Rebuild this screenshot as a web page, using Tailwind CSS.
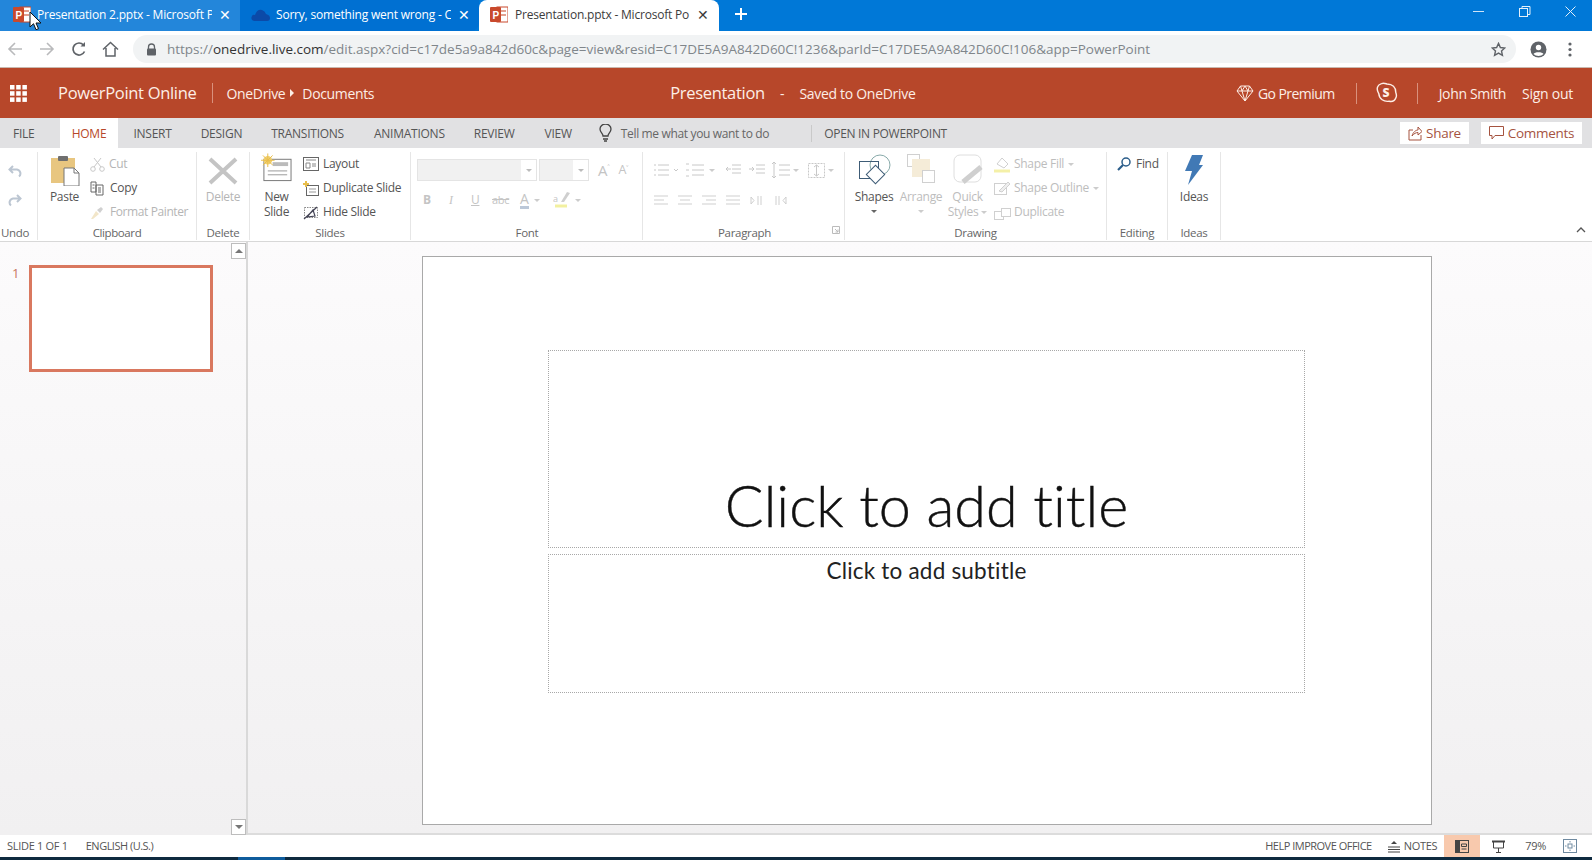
<!DOCTYPE html>
<html lang="en">
<head>
  <meta charset="UTF-8">
  <title>Presentation.pptx - Microsoft PowerPoint Online</title>
  <script src="https://cdn.jsdelivr.net/npm/@tailwindcss/browser@4"></script>
</head>
<body class="w-[1592px] h-[860px] overflow-hidden bg-white font-['Open_Sans','Noto_Sans',sans-serif] text-[#444]">

  <!-- Browser tabs -->
  <div class="relative h-[31px] flex bg-[#0078d7] text-white text-[12px] tracking-[-0.2px]">
    <div class="w-[240px] flex items-center pl-[13px] pb-[2px] bg-[#2386da]">
      <svg class="w-[18px] h-[17px] shrink-0" viewBox="0 0 18 17"><rect x="7" y="1" width="11" height="15" fill="#fff" stroke="#c9492c"/><rect x="9" y="4" width="7" height="2" fill="#e3a08f"/><rect x="9" y="8" width="7" height="2" fill="#e3a08f"/><rect x="0" y="1" width="11" height="15" rx="1" fill="#c9492c"/><text x="2.500" y="12.500" font-size="10" font-weight="700" fill="#fff" font-family="Liberation Sans">P</text></svg>
      <span class="ml-[6px] w-[175px] overflow-hidden whitespace-nowrap">Presentation 2.pptx - Microsoft P</span>
      <span class="ml-[7px] text-[14px] leading-none">✕</span>
    </div>
    <div class="w-[239px] flex items-center pl-[11px] pb-[2px] rounded-br-[8px] bg-[#0070d2]">
      <svg class="w-[19px] h-[12px] shrink-0" viewBox="0 0 19 12"><path d="M3 12 Q-1 11 1 7 Q2 5 4 6 Q6 0 11 1 Q14 2 15 5 Q19 6 19 9 Q19 12 16 12 Z" fill="#0b4aa8"/></svg>
      <span class="ml-[6px] w-[175px] overflow-hidden whitespace-nowrap">Sorry, something went wrong - C</span>
      <span class="ml-[7px] text-[14px] leading-none">✕</span>
    </div>
    <div class="w-[240px] flex items-center pl-[11px] pb-[2px] bg-white rounded-t-[8px] text-[#3c3c3c]">
      <svg class="w-[18px] h-[17px] shrink-0" viewBox="0 0 18 17"><rect x="7" y="1" width="11" height="15" fill="#fff" stroke="#c9492c"/><rect x="9" y="4" width="7" height="2" fill="#e3a08f"/><rect x="9" y="8" width="7" height="2" fill="#e3a08f"/><rect x="0" y="1" width="11" height="15" rx="1" fill="#c9492c"/><text x="2.500" y="12.500" font-size="10" font-weight="700" fill="#fff" font-family="Liberation Sans">P</text></svg>
      <span class="ml-[7px] w-[176px] overflow-hidden whitespace-nowrap">Presentation.pptx - Microsoft Po</span>
      <span class="ml-[6px] text-[14px] leading-none">✕</span>
    </div>
    <svg class="w-[14px] h-[14px] ml-[15px] mt-[7px]" viewBox="0 0 14 14" stroke="#fff" stroke-width="2"><path d="M7 1v12M1 7h12"/></svg>
    <div class="ml-auto flex items-center h-[22px] pr-[15px] gap-[33px]">
      <svg class="w-[13px] h-[13px]" viewBox="0 0 13 13" stroke="#cfe4f7"><path d="M1 6.500h11"/></svg>
      <svg class="w-[13px] h-[13px]" viewBox="0 0 13 13" fill="none" stroke="#e4f0fa"><rect x="1.500" y="3.500" width="8" height="8"/><path d="M4 3V1.500h8v8h-2"/></svg>
      <svg class="w-[13px] h-[13px]" viewBox="0 0 13 13" stroke="#e4f0fa"><path d="M1.500 1.500l10 10M11.500 1.500l-10 10"/></svg>
    </div>
    <!-- mouse pointer -->
    <svg class="absolute left-[29px] top-[11px] w-[13px] h-[20px]" viewBox="0 0 13 20"><path d="M1 1v15l3.500-3.300 2.500 6 2.500-1-2.500-5.700h5z" fill="#fff" stroke="#111"/></svg>
  </div>

  <!-- Address bar -->
  <div class="h-[37px] flex items-center border-b border-[#c9b9b0] bg-white">
    <svg class="w-[16px] h-[16px] ml-[7px]" viewBox="0 0 16 16" fill="none" stroke="#b9babc" stroke-width="1.600"><path d="M15 8H2M8 2L2 8l6 6"/></svg>
    <svg class="w-[16px] h-[16px] ml-[16px]" viewBox="0 0 16 16" fill="none" stroke="#b9babc" stroke-width="1.600"><path d="M1 8h13M8 2l6 6-6 6"/></svg>
    <svg class="w-[16px] h-[16px] ml-[16px]" viewBox="0 0 16 16" fill="none" stroke="#5f6368" stroke-width="1.700"><path d="M13.500 10.500A6 6 0 1 1 12.500 4"/><path d="M14 1v4.500H9.500" fill="#5f6368" stroke="none"/></svg>
    <svg class="w-[17px] h-[16px] ml-[15px]" viewBox="0 0 17 16" fill="none" stroke="#5f6368" stroke-width="1.500"><path d="M1 8.500L8.500 1.500 16 8.500M4 7v8h9V7"/></svg>
    <div class="ml-[14px] w-[1383px] h-[28px] rounded-full bg-[#f1f3f4] flex items-center pl-[13px] text-[13.500px] tracking-[-0.01px] text-[#80868b]">
      <svg class="w-[11px] h-[13px]" viewBox="0 0 11 13"><path d="M2.500 6V4a3 3 0 0 1 6 0v2" fill="none" stroke="#5f6368" stroke-width="1.300"/><rect x="1" y="5.500" width="9" height="7" rx="1" fill="#5f6368"/></svg>
      <span class="ml-[10px] whitespace-nowrap">https://<span class="text-[#333]">onedrive.live.com</span>/edit.aspx?cid=c17de5a9a842d60c&amp;page=view&amp;resid=C17DE5A9A842D60C!1236&amp;parId=C17DE5A9A842D60C!106&amp;app=PowerPoint</span>
      <svg class="ml-auto mr-[10px] w-[15px] h-[15px]" viewBox="0 0 16 16" fill="none" stroke="#5f6368" stroke-width="1.500"><path d="M8 1.500l2 4.400 4.700.5-3.500 3.200 1 4.700L8 11.900l-4.200 2.400 1-4.700L1.300 6.400 6 5.900z"/></svg>
    </div>
    <svg class="w-[17px] h-[17px] ml-[14px]" viewBox="0 0 17 17"><circle cx="8.500" cy="8.500" r="8" fill="#5f6368"/><circle cx="8.500" cy="6.500" r="2.700" fill="#fff"/><path d="M3.500 13c1-2.500 9-2.500 10 0-2.500 2.500-7.500 2.500-10 0z" fill="#fff"/></svg>
    <svg class="w-[4px] h-[15px] ml-[21px]" viewBox="0 0 4 15" fill="#5f6368"><circle cx="2" cy="2" r="1.600"/><circle cx="2" cy="7.500" r="1.600"/><circle cx="2" cy="13" r="1.600"/></svg>
  </div>

  <!-- App header -->
  <div class="h-[50px] flex items-center bg-[#b7472a] text-[#fdeee6] whitespace-nowrap">
    <svg class="w-[17px] h-[17px] ml-[10px]" viewBox="0 0 17 17" fill="#fff"><rect width="4.500" height="4.500"/><rect x="6.200" width="4.500" height="4.500"/><rect x="12.400" width="4.500" height="4.500"/><rect y="6.200" width="4.500" height="4.500"/><rect x="6.200" y="6.200" width="4.500" height="4.500"/><rect x="12.400" y="6.200" width="4.500" height="4.500"/><rect y="12.400" width="4.500" height="4.500"/><rect x="6.200" y="12.400" width="4.500" height="4.500"/><rect x="12.400" y="12.400" width="4.500" height="4.500"/></svg>
    <span class="ml-[31px] text-[16.500px] tracking-[-0.3px]">PowerPoint Online</span>
    <span class="ml-[15px] w-px h-[20px] bg-[#d9917d]"></span>
    <span class="ml-[14px] text-[14px] tracking-[-0.35px]">OneDrive</span>
    <span class="ml-[5px] w-0 h-0 border-y-[4px] border-y-transparent border-l-[4px] border-l-[#fdeee6]"></span>
    <span class="ml-[8px] text-[14px] tracking-[-0.35px]">Documents</span>
    <span class="ml-[296px] text-[16.500px] tracking-[-0.3px]">Presentation</span>
    <span class="ml-[15px] text-[14px]">-</span>
    <span class="ml-[15px] text-[14px] tracking-[-0.3px]">Saved to OneDrive</span>
    <svg class="ml-auto w-[18px] h-[17px]" viewBox="0 0 18 17" fill="none" stroke="#fdeee6"><path d="M4.500 1h9L17 6l-8 10L1 6zM1 6h16M6 6l3 10 3-10M4.500 1L6 6l3-5 3 5 1.500-5"/></svg>
    <span class="ml-[4px] text-[14px] tracking-[-0.55px]">Go Premium</span>
    <span class="ml-[21px] w-px h-[21px] bg-[#d9917d]"></span>
    <svg class="ml-[19px] w-[22px] h-[22px]" viewBox="0 0 20 20" fill="none" stroke="#fdeee6" stroke-width="1.300"><path d="M5 1.500c2-.800 3-.300 5 .300 5 0 8 3 8 7.700 .800 2 .800 3.500 0 5-1 2.500-3.500 3.500-6 3-5 .800-9-2-9.500-7C1 8 .800 6 1.500 4.300 2 3 3.500 2 5 1.500z"/><text x="5.800" y="14" font-size="11" font-weight="800" fill="#fdeee6" stroke="none" font-family="Open Sans">S</text></svg>
    <span class="ml-[19px] w-px h-[21px] bg-[#d9917d]"></span>
    <span class="ml-[21px] text-[14px] tracking-[-0.35px]">John Smith</span>
    <span class="ml-[16px] mr-[19px] text-[14px] tracking-[-0.25px]">Sign out</span>
  </div>

  <!-- Ribbon tabs -->
  <div class="h-[30px] flex items-center bg-[#e1e1e3] text-[12px] text-[#555] tracking-[-0.25px] whitespace-nowrap">
    <span class="ml-[13px] pt-[1px]">FILE</span>
    <span class="ml-[26px] w-[58px] h-full pt-[1px] pr-[1px] flex items-center justify-center bg-white text-[#b7472a]">HOME</span>
    <span class="ml-[15px] pt-[1px]">INSERT</span>
    <span class="ml-[29px] pt-[1px]">DESIGN</span>
    <span class="ml-[29px] pt-[1px]">TRANSITIONS</span>
    <span class="ml-[30px] pt-[1px]">ANIMATIONS</span>
    <span class="ml-[29px] pt-[1px]">REVIEW</span>
    <span class="ml-[30px] pt-[1px]">VIEW</span>
    <svg class="ml-[27px] w-[13px] h-[18px]" viewBox="0 0 13 18" fill="none" stroke="#444" stroke-width="1.300"><path d="M4 12c0-3-3-3.500-3-7a5.500 5 0 0 1 11 0c0 3.500-3 4-3 7z"/><path d="M4 15h5M5 17h3"/></svg>
    <span class="ml-[9px] pt-[1px] text-[#666] tracking-[-0.35px]">Tell me what you want to do</span>
    <span class="ml-[42px] w-px h-[17px] bg-[#c9c9c9]"></span>
    <span class="ml-[12px] pt-[1px] tracking-[-0.3px]">OPEN IN POWERPOINT</span>
    <span class="ml-auto w-[69px] h-[22px] flex items-center justify-center gap-[4px] bg-white text-[13.500px] tracking-[-0.3px] text-[#a5533f]">
      <svg class="w-[14px] h-[15px]" viewBox="0 0 14 15" fill="none" stroke="#a5533f"><path d="M5 4H1v10h12V9M4 10c1-4 4-6 6-6V1l4 4.500L10 9V6.500C8 6.500 6 7.500 4 10z"/></svg>Share</span>
    <span class="ml-[12px] mr-[10px] w-[101px] h-[22px] flex items-center justify-center gap-[4px] bg-white text-[13.500px] tracking-[-0.3px] text-[#a5533f]">
      <svg class="w-[15px] h-[14px]" viewBox="0 0 15 14" fill="none" stroke="#a5533f"><path d="M.500 .500h14v9H6L3 13V9.500H.500z"/></svg>Comments</span>
  </div>

  <!-- Ribbon -->
  <div class="relative h-[94px] flex border-b border-[#d8d8d8] bg-white text-[12px] tracking-[-0.3px] text-[#555] whitespace-nowrap">

    <!-- Undo -->
    <div class="w-[38px] flex flex-col border-r border-[#e6e6e6] mt-[4px] mb-[1px]">
      <div class="flex-1 flex flex-col items-center pt-[13px] gap-[15px] pr-[8px]">
        <svg class="w-[14px] h-[14px]" viewBox="0 0 14 14" fill="none" stroke="#bcc6d2" stroke-width="2"><path d="M5 1L1.500 4.500 5 8M2 4.500h7a4 4 0 0 1 2 7"/></svg>
        <svg class="w-[14px] h-[14px]" viewBox="0 0 14 14" fill="none" stroke="#bcc6d2" stroke-width="2"><path d="M9 1l3.500 3.500L9 8M12 4.500H5a4 4 0 0 0-2 7"/></svg>
      </div>
      <div class="h-[16px] pl-[1px] text-[11.500px] text-[#666]">Undo</div>
    </div>

    <!-- Clipboard -->
    <div class="w-[159px] flex flex-col border-r border-[#e6e6e6] mt-[4px] mb-[1px]">
      <div class="flex-1 flex">
        <div class="w-[52px] flex flex-col items-center pt-[3px] pl-[1px]">
          <svg class="w-[30px] h-[31px]" viewBox="0 0 30 31"><rect x="1" y="3" width="24" height="25" fill="#e8c680"/><rect x="8" y="1" width="10" height="5" rx="1" fill="#6f6f6f"/><path d="M14 13h10l5 5v13H14z" fill="#fff" stroke="#777"/><path d="M24 13v5h5" fill="none" stroke="#777"/></svg>
          <span class="mt-[2px]">Paste</span>
        </div>
        <div class="flex flex-col">
          <div class="h-[24px] flex items-center text-[#b5b5b5]"><svg class="w-[15px] h-[15px]" viewBox="0 0 15 15" fill="none" stroke="#c8c8c8"><path d="M4 1l7 9M11 1L4 10"/><circle cx="3" cy="12" r="2.300"/><circle cx="12" cy="12" r="2.300"/></svg><span class="ml-[4px]">Cut</span></div>
          <div class="h-[24px] flex items-center"><svg class="w-[15px] h-[15px]" viewBox="0 0 15 15" fill="none" stroke="#666"><path d="M1 1h5v10H1zM6 4h7v10H6zM2.500 4h2M2.500 7h2M8 7h3M8 9h3M8 11h3"/></svg><span class="ml-[5px]">Copy</span></div>
          <div class="h-[24px] flex items-center text-[#b5b5b5]"><svg class="w-[15px] h-[15px]" viewBox="0 0 15 15"><path d="M1 14l5-8 3 3-6 5z" fill="#f2e6c9"/><path d="M7 5l4-3 2 2-3 4z" fill="#d0d0d0"/></svg><span class="ml-[5px] tracking-[-0.4px]">Format Painter</span></div>
        </div>
      </div>
      <div class="h-[16px] text-center text-[11.500px] tracking-[-0.4px] text-[#666]">Clipboard</div>
    </div>

    <!-- Delete -->
    <div class="w-[53px] flex flex-col border-r border-[#e6e6e6] mt-[4px] mb-[1px]">
      <div class="flex-1 flex flex-col items-center pt-[4px] text-[#b5b5b5]">
        <svg class="w-[30px] h-[30px]" viewBox="0 0 30 30" fill="none" stroke="#c4c4c4" stroke-width="4"><path d="M2 3l26 24M28 3L2 27"/></svg>
        <span class="mt-[2px]">Delete</span>
      </div>
      <div class="h-[16px] text-center text-[11.500px] text-[#666]">Delete</div>
    </div>

    <!-- Slides -->
    <div class="w-[161px] flex flex-col border-r border-[#e6e6e6] mt-[4px] mb-[1px]">
      <div class="flex-1 flex">
        <div class="w-[53px] flex flex-col items-center leading-[15px]">
          <svg class="mt-[1px] mr-[1px] w-[31px] h-[30px]" viewBox="0 0 32 30"><rect x="3" y="6" width="28" height="22" fill="#fff" stroke="#777"/><rect x="12" y="9" width="16" height="4" fill="#bbb"/><path d="M7 18h20M7 22h20" stroke="#999"/><circle cx="7" cy="7" r="4.500" fill="#f0d070"/><path d="M7 0v14M0 7h14M2 2l10 10M12 2L2 12" stroke="#e8bd4a"/></svg>
          <span class="mt-[6px]">New</span><span>Slide</span>
        </div>
        <div class="flex flex-col">
          <div class="h-[24px] flex items-center"><svg class="w-[16px] h-[14px]" viewBox="0 0 16 14" fill="none" stroke="#666"><rect x=".500" y=".500" width="15" height="13"/><path d="M3 3h10M3 6h4v5H3zM9 7h4M9 9h4" stroke="#888"/></svg><span class="ml-[4px]">Layout</span></div>
          <div class="h-[24px] flex items-center"><svg class="w-[16px] h-[15px]" viewBox="0 0 16 15" fill="none" stroke="#666"><rect x="3.500" y="4.500" width="12" height="10"/><path d="M6 8h7M6 11h7" stroke="#999"/><path d="M3 0v6M0 3h6" stroke="#e8bd4a" stroke-width="2"/></svg><span class="ml-[4px]">Duplicate Slide</span></div>
          <div class="h-[24px] flex items-center"><svg class="w-[16px] h-[15px]" viewBox="0 0 16 15" fill="none"><rect x="1.500" y="2.500" width="13" height="10" stroke="#888" stroke-dasharray="1.500 1"/><path d="M1 14L14 2M4 12l6-7 2 6z" stroke="#445" stroke-width="1.200"/></svg><span class="ml-[4px]">Hide Slide</span></div>
        </div>
      </div>
      <div class="h-[16px] text-center text-[11.500px] text-[#666]">Slides</div>
    </div>

    <!-- Font -->
    <div class="w-[232px] flex flex-col border-r border-[#e6e6e6] mt-[4px] mb-[1px]">
      <div class="flex-1 flex flex-col pl-[6px]">
        <div class="flex items-center h-[22px] mt-[7px]">
          <div class="w-[120px] h-[22px] flex border border-[#e4e4e4] bg-[#f1f1f1]"><div class="flex-1"></div><div class="w-[15px] bg-white flex items-center justify-center"><span class="w-0 h-0 border-x-[3px] border-x-transparent border-t-[3px] border-t-[#bbb]"></span></div></div>
          <div class="ml-[2px] w-[50px] h-[22px] flex border border-[#e4e4e4] bg-[#f1f1f1]"><div class="flex-1"></div><div class="w-[15px] bg-white flex items-center justify-center"><span class="w-0 h-0 border-x-[3px] border-x-transparent border-t-[3px] border-t-[#bbb]"></span></div></div>
          <span class="ml-[9px] text-[15px] text-[#c4c4c4] leading-none">A<span class="text-[9px] align-top">˄</span></span>
          <span class="ml-[9px] text-[12.500px] text-[#c4c4c4] leading-none">A<span class="text-[9px] align-top">˅</span></span>
        </div>
        <div class="flex items-center h-[24px] mt-[7px] pl-[6px] text-[#c4c4c4] text-[12px]">
          <span class="font-bold w-[26px]">B</span>
          <span class="italic font-['Liberation_Serif'] w-[22px]">I</span>
          <span class="underline w-[21px]">U</span>
          <span class="w-[28px] text-[11px] line-through">abc</span>
          <span class="border-b-[3px] border-[#bcc8d8] text-[14px] leading-[15px]">A</span>
          <span class="ml-[5px] w-0 h-0 border-x-[3px] border-x-transparent border-t-[3px] border-t-[#ccc]"></span>
          <svg class="ml-[13px] w-[18px] h-[16px]" viewBox="0 0 18 16"><path d="M2 14h12" stroke="#f2f0a0" stroke-width="3"/><path d="M8 10l3 0 6-9-3-1z" fill="#cfcfcf"/><text x="0" y="10" font-size="9" fill="#c4c4c4" font-family="Open Sans">a</text></svg>
          <span class="ml-[4px] w-0 h-0 border-x-[3px] border-x-transparent border-t-[3px] border-t-[#ccc]"></span>
        </div>
      </div>
      <div class="h-[16px] pl-[1px] text-center text-[11.500px] text-[#666]">Font</div>
    </div>

    <!-- Paragraph -->
    <div class="w-[202px] flex flex-col border-r border-[#e6e6e6] mt-[4px] mb-[1px]">
      <div class="flex-1 flex flex-col pl-[11px]">
        <div class="flex items-center h-[24px] mt-[6px]">
          <svg class="w-[52px] h-[15px]" viewBox="0 0 52 15" fill="none" stroke="#c8c8c8"><path d="M4 2h11M4 7h11M4 12h11M0 2h2M0 7h2M0 12h2M20 6l2 2 2-2"/><path d="M38 2h12M38 7h12M38 12h12M32 1h3M32 7h3M32 13h3"/></svg>
          <span class="ml-[3px] w-0 h-0 border-x-[3px] border-x-transparent border-t-[3px] border-t-[#ccc]"></span>
          <svg class="ml-[10px] w-[40px] h-[15px]" viewBox="0 0 40 15" fill="none" stroke="#c8c8c8"><path d="M7 2h9M7 6h9M7 10h9M1 6h5M3 4L1 6l2 2M31 2h9M31 6h9M31 10h9M24 6h5M27 4l2 2-2 2"/></svg>
          <svg class="ml-[6px] w-[20px] h-[18px]" viewBox="0 0 20 18" fill="none" stroke="#c8c8c8"><path d="M3 1v16M1 3l2-2 2 2M1 15l2 2 2-2M8 4h11M8 9h11M8 14h11"/></svg>
          <span class="ml-[2px] w-0 h-0 border-x-[3px] border-x-transparent border-t-[3px] border-t-[#ccc]"></span>
          <svg class="ml-[9px] w-[17px] h-[15px]" viewBox="0 0 17 15" fill="none" stroke="#c8c8c8"><rect x=".500" y=".500" width="16" height="14" stroke-dasharray="2 1"/><path d="M8.500 2v11M6 4l2.500-2L11 4M6 11l2.500 2 2.500-2"/></svg>
          <span class="ml-[3px] w-0 h-0 border-x-[3px] border-x-transparent border-t-[3px] border-t-[#ccc]"></span>
        </div>
        <div class="flex items-center h-[20px] mt-[8px]">
          <svg class="w-[135px] h-[13px]" viewBox="0 0 135 13" fill="none" stroke="#cfcfcf"><path d="M0 2h14M0 6h10M0 10h14M24 2h14M26 6h10M24 10h14M48 2h14M52 6h10M48 10h14M72 2h14M72 6h14M72 10h14M97 3v7l3-3.500zM104 2v9M107 2v9M122 2v9M125 2v9M132 3v7l-3-3.500z"/></svg>
        </div>
      </div>
      <div class="relative h-[16px] text-center text-[11.500px] text-[#666] pl-[2px]">Paragraph
        <svg class="absolute right-[4px] top-[2px] w-[8px] h-[8px]" viewBox="0 0 8 8" fill="none" stroke="#bbb"><path d="M.500 .500h7v7h-7zM3 3l3 3M6 3.500V6H3.500"/></svg>
      </div>
    </div>

    <!-- Drawing -->
    <div class="w-[262px] flex flex-col border-r border-[#e6e6e6] mt-[4px] mb-[1px]">
      <div class="flex-1 flex">
        <div class="w-[46px] ml-[6px] flex flex-col items-center leading-[15px] text-[#555]">
          <svg class="mt-[2px] w-[33px] h-[32px]" viewBox="0 0 33 32" fill="none" stroke="#3e5c76"><circle cx="22" cy="11" r="10" stroke="#8aa"/><rect x="1.500" y="7.500" width="19" height="17"/><rect x="11" y="14" width="13" height="13" transform="rotate(45 17.500 20.500)" fill="#fff"/></svg>
          <span class="mt-[3px]">Shapes</span>
          <span class="mt-[6px] w-0 h-0 border-x-[3px] border-x-transparent border-t-[3px] border-t-[#666]"></span>
        </div>
        <div class="w-[48px] flex flex-col items-center leading-[15px] text-[#bdbdbd]">
          <svg class="mt-[2px] w-[28px] h-[30px]" viewBox="0 0 28 30" fill="none"><rect x=".500" y=".500" width="12" height="12" stroke="#d0d0d0"/><rect x="5" y="5" width="18" height="18" fill="#f5ecd8"/><rect x="15.500" y="16.500" width="12" height="12" stroke="#d0d0d0" fill="#fff"/></svg>
          <span class="mt-[5px]">Arrange</span>
          <span class="mt-[6px] w-0 h-0 border-x-[3px] border-x-transparent border-t-[3px] border-t-[#ccc]"></span>
        </div>
        <div class="w-[45px] flex flex-col items-center leading-[15px] text-[#bdbdbd]">
          <svg class="mt-[2px] w-[30px] h-[30px]" viewBox="0 0 30 30" fill="none"><rect x="1" y="1" width="27" height="27" rx="6" stroke="#dedede"/><path d="M10 28l18-15" stroke="#cfcfcf" stroke-width="5"/></svg>
          <span class="mt-[5px]">Quick</span>
          <span>Styles <span class="inline-block align-middle w-0 h-0 border-x-[3px] border-x-transparent border-t-[3px] border-t-[#ccc]"></span></span>
        </div>
        <div class="ml-[4px] flex flex-col text-[#bdbdbd]">
          <div class="h-[24px] flex items-center"><svg class="w-[17px] h-[17px]" viewBox="0 0 17 17" fill="none"><path d="M3 8l5-6 6 6-4 4z" stroke="#d0d0d0"/><path d="M0 15h16" stroke="#f4f0a8" stroke-width="3"/></svg><span class="ml-[3px]">Shape Fill</span><span class="ml-[4px] w-0 h-0 border-x-[3px] border-x-transparent border-t-[3px] border-t-[#ccc]"></span></div>
          <div class="h-[24px] flex items-center"><svg class="w-[17px] h-[15px]" viewBox="0 0 17 15" fill="none" stroke="#d0d0d0"><rect x=".500" y="2.500" width="12" height="11"/><path d="M5 10L14 1l2 2-8 8z" fill="#eee"/></svg><span class="ml-[3px]">Shape Outline</span><span class="ml-[4px] w-0 h-0 border-x-[3px] border-x-transparent border-t-[3px] border-t-[#ccc]"></span></div>
          <div class="h-[24px] flex items-center"><svg class="w-[17px] h-[15px]" viewBox="0 0 17 15" fill="none" stroke="#d0d0d0"><rect x=".500" y="6.500" width="9" height="8"/><rect x="7.500" y="3.500" width="9" height="8" fill="#fff"/></svg><span class="ml-[3px]">Duplicate</span></div>
        </div>
      </div>
      <div class="h-[16px] text-center text-[11.500px] text-[#666]">Drawing</div>
    </div>

    <!-- Editing -->
    <div class="w-[61px] flex flex-col border-r border-[#e6e6e6] mt-[4px] mb-[1px]">
      <div class="flex-1 flex items-start pl-[10px]">
        <div class="h-[24px] flex items-center"><svg class="w-[14px] h-[14px]" viewBox="0 0 14 14" fill="none" stroke="#2b5d8a" stroke-width="1.500"><circle cx="9" cy="5" r="4"/><path d="M6 8l-5 5" stroke-width="2.200"/></svg><span class="ml-[5px]">Find</span></div>
      </div>
      <div class="h-[16px] text-center text-[11.500px] text-[#666]">Editing</div>
    </div>

    <!-- Ideas -->
    <div class="w-[53px] flex flex-col border-r border-[#e6e6e6] mt-[4px] mb-[1px]">
      <div class="flex-1 flex flex-col items-center pt-[3px]">
        <svg class="w-[18px] h-[30px]" viewBox="0 0 18 30"><path d="M7 0h11l-4 10h4L3 30l4-14H0z" fill="#4179b5"/></svg>
        <span class="mt-[3px]">Ideas</span>
      </div>
      <div class="h-[16px] text-center text-[11.500px] text-[#666]">Ideas</div>
    </div>

    <svg class="absolute right-[6px] top-[79px] w-[10px] h-[6px]" viewBox="0 0 10 6" fill="none" stroke="#555" stroke-width="1.300"><path d="M1 5l4-4 4 4"/></svg>
  </div>

  <!-- Work area -->
  <div class="h-[593px] flex bg-linear-to-b from-[#fcfbfc] to-[#f1f0f1]">

    <!-- Slide list -->
    <div class="w-[248px] flex border-r-2 border-[#d9d9d9]">
      <div class="w-[29px] shrink-0 pt-[22px] pl-[12px] text-[13px] leading-[18px] text-[#c9775f]">1</div>
      <div class="w-[184px] h-[107px] shrink-0 mt-[23px] border-[3px] border-[#d9785f] bg-white"></div>
      <div class="ml-[18px] w-[15px] shrink-0 flex flex-col justify-between">
        <div class="h-[16px] mt-[1px] flex items-center justify-center border border-[#bdbdbd] bg-white"><span class="w-0 h-0 border-x-[4px] border-x-transparent border-b-[4px] border-b-[#777]"></span></div>
        <div class="h-[16px] flex items-center justify-center border border-[#bdbdbd] bg-white"><span class="w-0 h-0 border-x-[4px] border-x-transparent border-t-[4px] border-t-[#777]"></span></div>
      </div>
    </div>

    <!-- Slide canvas -->
    <div class="flex-1 border-b-2 border-[#dcdcdc] pl-[174px] pt-[14px]">
      <div class="w-[1010px] h-[569px] border border-[#a9a9a9] bg-white pl-[125px] pt-[93px] font-['Lato',sans-serif] text-[#111] [font-variant-ligatures:none]">
        <div class="w-[757px] h-[198px] border border-dotted border-[#a8a8a8] flex items-end justify-center text-[57.500px] font-light leading-[84px] [-webkit-text-stroke:0.4px_#111]">Click to add title</div>
        <div class="w-[757px] h-[139px] mt-[6px] border border-dotted border-[#a8a8a8] text-center text-[22.500px] leading-[32px] tracking-[0.2px] text-[#222]">Click to add subtitle</div>
      </div>
    </div>
  </div>

  <!-- Status bar -->
  <div class="h-[22px] flex items-center bg-white text-[11px] text-[#555] tracking-[-0.3px] whitespace-nowrap">
    <span class="ml-[7px]">SLIDE 1 OF 1</span>
    <span class="ml-[18px] tracking-[-0.5px]">ENGLISH (U.S.)</span>
    <span class="ml-auto tracking-[-0.5px]">HELP IMPROVE OFFICE</span>
    <svg class="ml-[16px] w-[12px] h-[13px]" viewBox="0 0 12 13" fill="none" stroke="#444"><path d="M0 7h12M0 9.500h12M0 12h12"/><path d="M3 4l3-3 3 3z" fill="#444" stroke="none"/></svg>
    <span class="ml-[4px]">NOTES</span>
    <span class="ml-[7px] w-[36px] h-full flex items-center justify-center bg-[#f8c9ad]"><svg class="w-[14px] h-[13px]" viewBox="0 0 14 13"><rect width="14" height="13" fill="#444"/><rect x="5" y="1" width="8" height="11" fill="#f8c9ad"/><path d="M6.500 4h5v2.500h-5zM6.500 9h5" stroke="#444" fill="none"/></svg></span>
    <svg class="ml-[12px] w-[13px] h-[13px]" viewBox="0 0 13 13" fill="none" stroke="#444"><path d="M0 1.500h13" stroke-width="2"/><path d="M1.500 2v6h10V2M6.500 8v4M4 12.500h5"/></svg>
    <span class="ml-[20px]">79%</span>
    <svg class="ml-[17px] mr-[15px] w-[14px] h-[14px]" viewBox="0 0 14 14" fill="none" stroke="#6f8aa0"><rect x=".500" y=".500" width="13" height="13"/><rect x="5" y="5" width="4" height="4"/><path d="M7 2v1.500M7 10.500V12M2 7h1.500M10.500 7H12"/></svg>
  </div>

  <!-- Taskbar edge -->
  <div class="h-[3px] flex bg-[#0e2a3f]"><div class="ml-[238px] w-[47px] bg-[#0f5c9c]"></div></div>
</body>
</html>
